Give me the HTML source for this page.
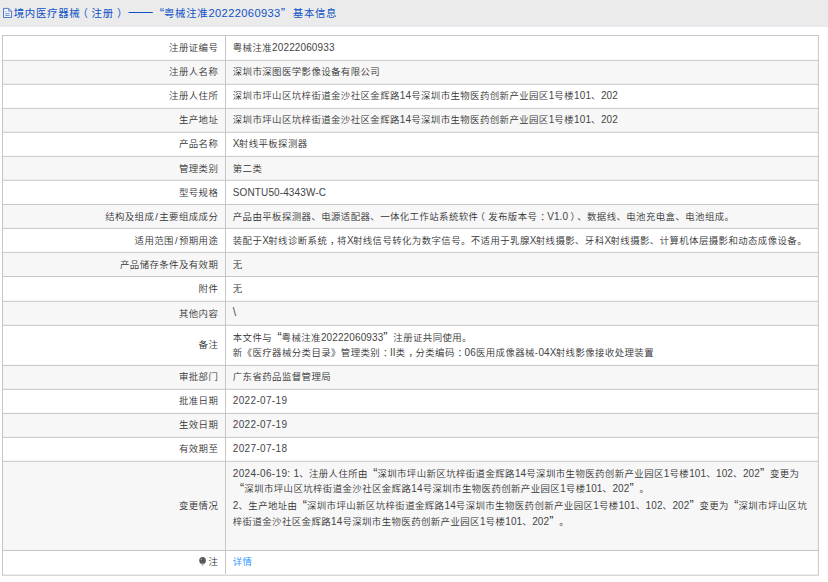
<!DOCTYPE html>
<html lang="zh-CN">
<head>
<meta charset="utf-8">
<title>境内医疗器械（注册）基本信息</title>
<style>
html,body{margin:0;padding:0;background:#fff;}
body{width:828px;height:582px;overflow:hidden;position:relative;}
#tw{transform:translate(0.3px,0) scale(0.83333) !important;}
.w{position:absolute;left:0;top:0;width:994px;height:699px;transform:scale(0.83333);transform-origin:0 0;
 font-family:"Liberation Sans","Noto Sans CJK SC",sans-serif;font-size:11.3px;color:#333;font-weight:350;letter-spacing:0.49px;text-spacing-trim:space-all;}
#hd{position:absolute;left:0;top:0;width:994px;height:31px;background:#ebebeb;border-bottom:1px solid #e4e4f4;}
#hd .ico{position:absolute;left:3px;top:9px;width:12px;height:13px;}
.pl{position:relative;left:-3.5px;}
.pr{position:relative;left:4px;}
.ds{font-size:14.6px;letter-spacing:0;position:relative;top:-1.5px;margin-left:0;margin-right:-4.2px;}
#hd .tt{position:absolute;left:16.5px;top:0;line-height:31px;font-size:12.5px;color:#0f52c6;white-space:nowrap;letter-spacing:0.83px;font-weight:400;}
#hd .tt .n{font-size:13.33px;letter-spacing:0.47px;color:inherit;}
#hd .tt .q{width:13.33px;font-size:15.5px;}
table{position:absolute;left:2px;top:42px;width:980px;border-collapse:collapse;table-layout:fixed;}
td{border:1px solid transparent;height:28px;padding:0;line-height:18px;vertical-align:middle;white-space:nowrap;overflow:hidden;}
td.l{width:258.5px;text-align:right;padding-right:8.5px;}
td.v{padding-left:8px;}
#grid{position:absolute;left:0;top:0;}
tr.bz td.v{line-height:18px;}
tr.bg td.v{line-height:19.5px;vertical-align:top;padding-top:4.6px;height:auto;}
.n{font-size:12px;line-height:1;letter-spacing:0.14px;color:#444;}
.d{letter-spacing:0.4px;}
.x{letter-spacing:-0.8px;}
.sl{margin:0 1.2px;}
.bs{display:inline-block;transform-origin:0 100%;transform:scale(1.3,1.27);color:#555;}
.bl{position:relative;left:-3.5px;}
.br{position:relative;left:2.9px;margin-right:-1px;}
.bc{position:relative;left:3.4px;}
.q{display:inline-block;font-size:15px;line-height:1;letter-spacing:0;font-weight:400;}
.lq{width:11.4px;text-align:right;}
.rq{width:12px;text-align:left;}
a{color:#1e90ff;text-decoration:none;}
.bulb{display:inline-block;width:9px;height:12px;vertical-align:-2px;margin-right:2.6px;}
</style>
</head>
<body>
<svg id="grid" width="828" height="582" viewBox="0 0 828 582" fill="none" stroke="#c6c6c6" stroke-width="1"><rect stroke="none" x="2.5" y="60.4" width="815.9" height="23.9" fill="#f7f7f7"/><rect stroke="none" x="2.5" y="108.4" width="815.9" height="23.9" fill="#f7f7f7"/><rect stroke="none" x="2.5" y="156.4" width="815.9" height="23.9" fill="#f7f7f7"/><rect stroke="none" x="2.5" y="204.5" width="815.9" height="23.9" fill="#f7f7f7"/><rect stroke="none" x="2.5" y="252.4" width="815.9" height="24.1" fill="#f7f7f7"/><rect stroke="none" x="2.5" y="301.3" width="815.9" height="24" fill="#f7f7f7"/><rect stroke="none" x="2.5" y="365.4" width="815.9" height="23.9" fill="#f7f7f7"/><rect stroke="none" x="2.5" y="413.4" width="815.9" height="24" fill="#f7f7f7"/><rect stroke="none" x="2.5" y="461.3" width="815.9" height="89.2" fill="#f7f7f7"/><path d="M2 35.5H818.9"/><path d="M2 60.4H818.9"/><path d="M2 84.3H818.9"/><path d="M2 108.4H818.9"/><path d="M2 132.3H818.9"/><path d="M2 156.4H818.9"/><path d="M2 180.3H818.9"/><path d="M2 204.5H818.9"/><path d="M2 228.4H818.9"/><path d="M2 252.4H818.9"/><path d="M2 276.5H818.9"/><path d="M2 301.3H818.9"/><path d="M2 325.3H818.9"/><path d="M2 365.4H818.9"/><path d="M2 389.3H818.9"/><path d="M2 413.4H818.9"/><path d="M2 437.4H818.9"/><path d="M2 461.3H818.9"/><path d="M2 550.5H818.9"/><path d="M2 575.2H818.9"/><path d="M2.5 35.5V575.2"/><path d="M818.4 35.5V575.2"/><path d="M225.5 35.5V574.2"/></svg>
<div id="wrap" class="w">
<div id="hd">
<svg class="ico" viewBox="0 0 12 13"><path d="M1.25 1H7.4L10.9 4.5V12H1.25Z" fill="#f1f5fb" stroke="#3f66c9" stroke-width="1.1" stroke-linejoin="round"/><path d="M7.4 1.2V4.5H10.7" fill="none" stroke="#5a78d2" stroke-width="1"/><path d="M3.3 5.1H4.6M3.3 7.4H8.6M3.3 9.6H8.6" stroke="#5f7fd0" stroke-width="1" fill="none"/></svg>
<div class="tt">境内医疗器械<span class="pl">（</span>注册<span class="pr">）</span> <span class="ds">——</span>&nbsp;<span class="q lq">“</span>粤械注准<span class="n">20222060933</span><span class="q rq" style="margin-right:1.2px">”</span>基本信息</div>
</div>
</div>
<div id="tw" class="w">
<table>
<tr><td class="l">注册证编号</td><td class="v">粤械注准<span class="n">20222060933</span></td></tr>
<tr class="e"><td class="l">注册人名称</td><td class="v">深圳市深图医学影像设备有限公司</td></tr>
<tr><td class="l">注册人住所</td><td class="v">深圳市坪山区坑梓街道金沙社区金辉路<span class="n">14</span>号深圳市生物医药创新产业园区<span class="n">1</span>号楼<span class="n">101</span>、<span class="n">202</span></td></tr>
<tr class="e"><td class="l">生产地址</td><td class="v">深圳市坪山区坑梓街道金沙社区金辉路<span class="n">14</span>号深圳市生物医药创新产业园区<span class="n">1</span>号楼<span class="n">101</span>、<span class="n">202</span></td></tr>
<tr><td class="l">产品名称</td><td class="v"><span class="n"><span class="x">X</span></span>射线平板探测器</td></tr>
<tr class="e"><td class="l">管理类别</td><td class="v">第二类</td></tr>
<tr><td class="l">型号规格</td><td class="v"><span class="n">SONTU50-4343W-C</span></td></tr>
<tr class="e"><td class="l">结构及组成<span class="sl">/</span>主要组成成分</td><td class="v">产品由平板探测器、电源适配器、一体化工作站系统软件<span class="bl">（</span>发布版本号<span class="bc">：</span><span class="n">V1.0</span><span class="br">）</span>、数据线、电池充电盒、电池组成。</td></tr>
<tr><td class="l">适用范围<span class="sl">/</span>预期用途</td><td class="v">装配于<span class="n"><span class="x">X</span></span>射线诊断系统<span class="bc">，</span>将<span class="n"><span class="x">X</span></span>射线信号转化为数字信号。不适用于乳腺<span class="n"><span class="x">X</span></span>射线摄影、牙科<span class="n"><span class="x">X</span></span>射线摄影、计算机体层摄影和动态成像设备。</td></tr>
<tr class="e"><td class="l">产品储存条件及有效期</td><td class="v">无</td></tr>
<tr><td class="l">附件</td><td class="v">无</td></tr>
<tr class="e"><td class="l">其他内容</td><td class="v"><span class="bs">\</span></td></tr>
<tr class="bz"><td class="l" style="height:46px">备注</td><td class="v" style="height:46px">本文件与<span class="q lq">“</span>粤械注准<span class="n">20222060933</span><span class="q rq">”</span>注册证共同使用。<br>新《医疗器械分类目录》管理类别<span class="bc">：</span><span class="n">II</span>类<span class="bc">，</span>分类编码<span class="bc">：</span><span class="n">06</span>医用成像器械-<span class="n">04<span class="x">X</span></span>射线影像接收处理装置</td></tr>
<tr class="e"><td class="l">审批部门</td><td class="v">广东省药品监督管理局</td></tr>
<tr><td class="l">批准日期</td><td class="v"><span class="n d">2022-07-19</span></td></tr>
<tr class="e"><td class="l">生效日期</td><td class="v"><span class="n d">2022-07-19</span></td></tr>
<tr><td class="l">有效期至</td><td class="v"><span class="n d">2027-07-18</span></td></tr>
<tr class="e bg"><td class="l" style="height:105px">变更情况</td><td class="v"><span class="n d">2024-06-19:</span> <span class="n">1</span>、注册人住所由<span class="q lq">“</span>深圳市坪山新区坑梓街道金辉路<span class="n">14</span>号深圳市生物医药创新产业园区<span class="n">1</span>号楼<span class="n">101</span>、<span class="n">102</span>、<span class="n">202</span><span class="q rq">”</span>变更为<br><span class="q lq" style="margin-left:2.4px">“</span>深圳市坪山区坑梓街道金沙社区金辉路<span class="n">14</span>号深圳市生物医药创新产业园区<span class="n">1</span>号楼<span class="n">101</span>、<span class="n">202</span><span class="q rq">”</span>。<br><span class="n">2</span>、生产地址由<span class="q lq">“</span>深圳市坪山新区坑梓街道金辉路<span class="n">14</span>号深圳市生物医药创新产业园区<span class="n">1</span>号楼<span class="n">101</span>、<span class="n">102</span>、<span class="n">202</span><span class="q rq">”</span>变更为<span class="q lq">“</span>深圳市坪山区坑<br>梓街道金沙社区金辉路<span class="n">14</span>号深圳市生物医药创新产业园区<span class="n">1</span>号楼<span class="n">101</span>、<span class="n">202</span><span class="q rq">”</span>。</td></tr>
<tr><td class="l"><svg class="bulb" viewBox="0 0 9 12" style="overflow:visible"><ellipse cx="4.7" cy="4.55" rx="4.0" ry="4.25" fill="#585858"/><path d="M3.4 8.3H6L5.7 10.9H3.7Z" fill="#b0b0b0"/><circle cx="3.2" cy="3" r="0.9" fill="#9aa6b8"/></svg>注</td><td class="v"><a>详情</a></td></tr>
</table>
</div>
</body>
</html>
